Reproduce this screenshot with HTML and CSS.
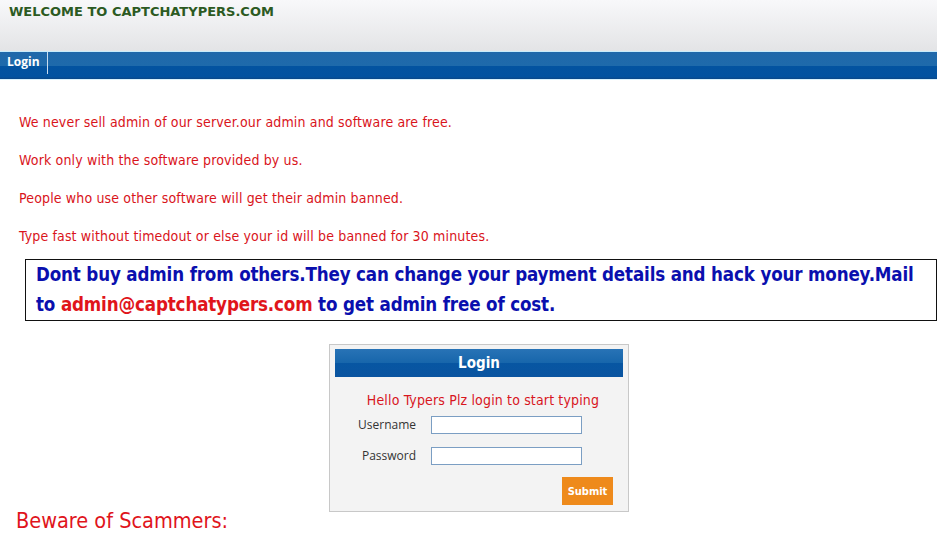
FILE: index.html
```html
<!DOCTYPE html>
<html>
<head>
<meta charset="utf-8">
<title>Captchatypers</title>
<link rel="stylesheet" href="styles.css">
</head>
<body>
<div class="header">
  <h1 class="site-title">WELCOME TO CAPTCHATYPERS.COM</h1>
</div>
<div class="nav">
  <a class="nav-item" href="#">Login</a>
</div>
<div class="content">
  <div class="notices">
    <p>We never sell admin of our server.our admin and software are free.</p>
    <p>Work only with the software provided by us.</p>
    <p>People who use other software will get their admin banned.</p>
    <p>Type fast without timedout or else your id will be banned for 30 minutes.</p>
  </div>
  <div class="warning-box">
    Dont buy admin from others.They can change your payment details and hack your money.Mail to <span class="email">admin@captchatypers.com</span> to get admin free of cost.
  </div>
  <div class="login-wrap">
    <form class="login-box">
      <div class="login-head">Login</div>
      <div class="login-hello">Hello Typers Plz login to start typing</div>
      <div class="login-row">
        <label class="login-label">Username</label>
        <input class="login-input" type="text">
      </div>
      <div class="login-row">
        <label class="login-label">Password</label>
        <input class="login-input" type="password">
      </div>
      <div class="login-actions">
        <button class="submit-btn" type="button">Submit</button>
      </div>
    </form>
  </div>
  <h2 class="beware">Beware of Scammers:</h2>
</div>
</body>
</html>
```
FILE: styles.css
```css
html, body {
  margin: 0;
  padding: 0;
  background: #ffffff;
  overflow: hidden;
}
body {
  font-family: "DejaVu Sans Condensed", "Open Sans", sans-serif;
}
.header {
  height: 51px;
  background: linear-gradient(#f8f8fa, #e3e4e6);
}
.site-title {
  margin: 0;
  padding: 3px 9px 0;
  font-family: "DejaVu Sans", sans-serif;
  font-size: 13px;
  font-weight: bold;
  color: #2c5a22;
  line-height: 18px;
}
.nav {
  height: 27px;
  border-top: 1px solid #c9ecfb;
  border-bottom: 1px solid #d8f2fd;
  background: linear-gradient(#2068aa 0, #1e6aab 50%, #0353a0 50%, #0252a0 92%, #0b4787 100%);
  display: flex;
}
.nav-item {
  display: block;
  color: #ffffff;
  font-family: "Open Sans", sans-serif;
  font-weight: bold;
  font-size: 12px;
  text-decoration: none;
  padding: 0 7px;
  height: 22px;
  line-height: 20px;
  border-right: 1px solid #c8dcef;
}
.notices {
  padding: 34px 0 0 19px;
}
.notices p {
  margin: 0 0 22px;
  font-size: 14px;
  letter-spacing: 0.15px;
  line-height: 16px;
  color: #d9141b;
}
.notices p:last-child {
  margin-bottom: 15px;
}
.warning-box {
  margin-left: 25px;
  border: 1px solid #111;
  padding: 0 4px 0 10px;
  font-size: 18.6px;
  letter-spacing: -0.15px;
  font-weight: bold;
  line-height: 30px;
  color: #0a0fae;
}
.email {
  color: #e0151b;
}
.login-wrap {
  display: flex;
  justify-content: center;
  padding-left: 21px;
  margin-top: 23px;
}
.login-box {
  width: 288px;
  padding: 4px 5px 6px;
  border: 1px solid #c8c8c8;
  background: #f3f3f3;
  margin: 0;
}
.login-head {
  height: 28px;
  line-height: 28px;
  text-align: center;
  color: #fff;
  font-weight: bold;
  font-size: 15px;
  background: linear-gradient(#2873b6, #1766ab 50%, #0756a2 51%, #0a54a0);
}
.login-hello {
  text-align: center;
  color: #d8161e;
  font-size: 14px;
  letter-spacing: 0.15px;
  line-height: 16px;
  margin: 15px 0 1px;
  padding-left: 8px;
}
.login-row {
  display: flex;
  align-items: center;
  gap: 15px;
  height: 31px;
}
.login-label {
  width: 81px;
  text-align: right;
  font-family: "Open Sans", sans-serif;
  font-size: 12px;
  color: #333;
}
.login-input {
  width: 151px;
  height: 18px;
  box-sizing: border-box;
  border: 1px solid #7b9ec3;
  background: #fff;
  padding: 0 2px;
  margin: 0;
}
.login-actions {
  display: flex;
  justify-content: flex-end;
  padding-right: 10px;
  margin-top: 6px;
}
.submit-btn {
  width: 51px;
  height: 28px;
  border: 0;
  background: #ee8a1b;
  color: #fff;
  font-family: "DejaVu Sans Condensed", "Open Sans", sans-serif;
  font-weight: bold;
  font-size: 11px;
  padding: 0;
}
.beware {
  margin: -3px 0 0 16px;
  font-size: 21.5px;
  font-weight: normal;
  line-height: 24px;
  color: #e0141b;
}
```
